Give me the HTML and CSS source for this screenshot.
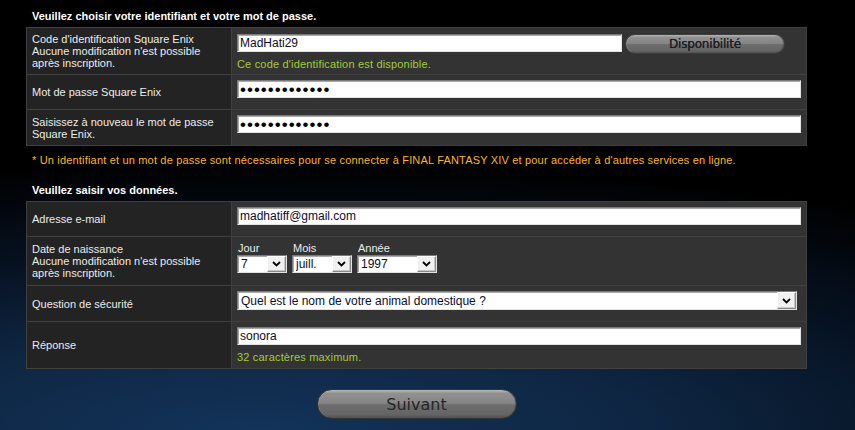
FILE: index.html
```html
<!DOCTYPE html>
<html lang="fr">
<head>
<meta charset="utf-8">
<title>Inscription</title>
<link rel="stylesheet" href="styles.css">
</head>
<body>
<main class="page">
  <h2 class="section-title">Veuillez choisir votre identifiant et votre mot de passe.</h2>
  <div class="form-table">
    <div class="row row-id">
      <div class="label">Code d'identification Square Enix<br>Aucune modification n'est possible<br>après inscription.</div>
      <div class="value value-id">
        <div class="inline">
          <input class="text id-input" type="text" value="MadHati29">
          <button class="pill pill-small" type="button">Disponibilité</button>
        </div>
        <p class="hint">Ce code d'identification est disponible.</p>
      </div>
    </div>
    <div class="row row-pass">
      <div class="label">Mot de passe Square Enix</div>
      <div class="value">
        <input class="text password" type="password" value="abcdefghijklm">
      </div>
    </div>
    <div class="row row-confirm">
      <div class="label">Saisissez à nouveau le mot de passe<br>Square Enix.</div>
      <div class="value">
        <input class="text password" type="password" value="abcdefghijklm">
      </div>
    </div>
  </div>

  <p class="note">* Un identifiant et un mot de passe sont nécessaires pour se connecter à FINAL FANTASY XIV et pour accéder à d'autres services en ligne.</p>

  <h2 class="section-title section-second">Veuillez saisir vos données.</h2>
  <div class="form-table">
    <div class="row row-mail">
      <div class="label">Adresse e-mail</div>
      <div class="value">
        <input class="text" type="text" value="madhatiff@gmail.com">
      </div>
    </div>
    <div class="row row-birth">
      <div class="label">Date de naissance<br>Aucune modification n'est possible<br>après inscription.</div>
      <div class="value">
        <div class="date-fields">
          <label class="date-field field-day">
            <span class="date-caption">Jour</span>
            <span class="select">
              <select><option>7</option></select>
              <span class="select-arrow"><svg width="9" height="6" viewBox="0 0 9 6"><path d="M1 1 L4.5 4.5 L8 1" fill="none" stroke="#000" stroke-width="1.8"/></svg></span>
            </span>
          </label>
          <label class="date-field field-month">
            <span class="date-caption">Mois</span>
            <span class="select">
              <select><option>juill.</option></select>
              <span class="select-arrow"><svg width="9" height="6" viewBox="0 0 9 6"><path d="M1 1 L4.5 4.5 L8 1" fill="none" stroke="#000" stroke-width="1.8"/></svg></span>
            </span>
          </label>
          <label class="date-field field-year">
            <span class="date-caption">Année</span>
            <span class="select">
              <select><option>1997</option></select>
              <span class="select-arrow"><svg width="9" height="6" viewBox="0 0 9 6"><path d="M1 1 L4.5 4.5 L8 1" fill="none" stroke="#000" stroke-width="1.8"/></svg></span>
            </span>
          </label>
        </div>
      </div>
    </div>
    <div class="row row-question">
      <div class="label">Question de sécurité</div>
      <div class="value">
        <span class="select select-question">
          <select><option>Quel est le nom de votre animal domestique ?</option></select>
          <span class="select-arrow"><svg width="9" height="6" viewBox="0 0 9 6"><path d="M1 1 L4.5 4.5 L8 1" fill="none" stroke="#000" stroke-width="1.8"/></svg></span>
        </span>
      </div>
    </div>
    <div class="row row-answer">
      <div class="label">Réponse</div>
      <div class="value">
        <input class="text" type="text" value="sonora">
        <p class="hint hint-answer">32 caractères maximum.</p>
      </div>
    </div>
  </div>

  <div class="actions">
    <button class="pill pill-large" type="submit">Suivant</button>
  </div>
</main>
</body>
</html>
```

FILE: styles.css
```css
* { box-sizing: border-box; }

html, body {
  margin: 0;
  height: 100%;
}

body {
  background-color: #000;
  background-image: radial-gradient(ellipse 130% 62% at 30% 100%, #13335a 0%, #0e2642 35%, #061222 65%, #000 100%);
  background-repeat: no-repeat;
  font-family: "Liberation Sans", Arial, sans-serif;
  font-size: 11px;
  color: #e6e6e6;
  overflow: hidden;
}

.page {
  width: 781px;
  margin-left: 26px;
  padding-top: 10px;
}

.section-title {
  margin: 0 0 5px;
  padding-left: 6px;
  font-size: 11px;
  line-height: 12px;
  font-weight: bold;
  color: #fff;
}

.section-second {
  margin-top: 18px;
}

.form-table {
  border: 1px solid #404040;
}

.row {
  display: grid;
  grid-template-columns: 205px 1fr;
  border-top: 1px solid #404040;
}

.row:first-child { border-top: 0; }

/* heights include the 1px top divider */
.row-id { min-height: 46px; }
.row-pass { min-height: 35px; }
.row-confirm { min-height: 36px; }
.row-mail { min-height: 34px; }
.row-birth { min-height: 49px; }
.row-question { min-height: 36px; }
.row-answer { min-height: 47px; }

.label {
  background: #232323;
  border-right: 1px solid #404040;
  padding: 0 5px;
  display: flex;
  align-items: center;
  line-height: 12px;
  color: #ececec;
}

.value {
  background: #333;
  padding: 5px 5px 0;
}

.value-id { padding-top: 6px; }

.inline {
  display: flex;
  align-items: flex-start;
}

.text {
  display: block;
  width: 100%;
  height: 18px;
  margin: 0;
  padding: 0 2px;
  border: 1px solid;
  border-color: #7a7a7a #e2e2e2 #e2e2e2 #7a7a7a;
  box-shadow: inset 1px 1px 0 #a8a8a8;
  background: #fff;
  font: 12px "Liberation Sans", Arial, sans-serif;
  color: #0c0c2c;
  outline: none;
}

.id-input {
  width: 385px;
  flex: none;
}

.password {
  font-size: 17px;
  letter-spacing: 1px;
  color: #000;
  padding-top: 1px;
}

.pill {
  display: block;
  padding: 0;
  border: 1px solid #3c3c3c;
  background: linear-gradient(#b8b8b8 0%, #919191 12%, #858585 47%, #6e6e6e 53%, #646464 88%, #505050 100%);
  box-shadow: inset 1px 0 0 rgba(255,255,255,0.15), inset -1px 0 0 rgba(0,0,0,0.2);
  color: #1e1e1e;
  font-family: "DejaVu Sans", Verdana, sans-serif;
  cursor: pointer;
}

.pill-small {
  width: 160px;
  height: 20px;
  margin-left: 3px;
  border-radius: 10px;
  font-size: 12px;
  letter-spacing: -0.2px;
  text-shadow: 0 0 0.4px #1e1e1e;
}

.pill-large {
  width: 200px;
  height: 30px;
  border-radius: 15px;
  font-size: 16px;
  border-color: #333;
  color: #262626;
}

.hint {
  margin: 4px 0 0;
  line-height: 12px;
  color: #a2cc38;
  font-size: 11px;
  letter-spacing: 0.18px;
}

.hint-answer { margin-top: 6px; }

.note {
  margin: 8px 0 0;
  padding-left: 6px;
  line-height: 12px;
  color: #ffb422;
  font-size: 11px;
  letter-spacing: 0.18px;
}

.date-fields {
  display: flex;
  gap: 5px;
}

.date-field {
  display: flex;
  flex-direction: column;
}

.date-caption {
  line-height: 13px;
  padding-left: 1px;
  color: #ececec;
}

.field-day { width: 50px; }
.field-month { width: 60px; }
.field-year { width: 80px; }

.select {
  position: relative;
  display: block;
  height: 18px;
}

.select select {
  display: block;
  width: 100%;
  height: 100%;
  margin: 0;
  padding: 0 0 0 3px;
  -webkit-appearance: none;
  appearance: none;
  border: 1px solid;
  border-color: #7a7a7a #e2e2e2 #e2e2e2 #7a7a7a;
  box-shadow: inset 1px 1px 0 #a8a8a8;
  border-radius: 0;
  background: #fff;
  font: 12px "Liberation Sans", Arial, sans-serif;
  color: #0c0c2c;
  outline: none;
}

.select-arrow {
  position: absolute;
  top: 1px;
  right: 1px;
  bottom: 1px;
  width: 19px;
  display: flex;
  align-items: center;
  justify-content: center;
  background: #f0f0f0;
  border: 1px solid;
  border-color: #fff #8a8a8a #8a8a8a #fff;
  box-shadow: inset -1px -1px 0 #c8c8c8;
  pointer-events: none;
}

.select-question {
  width: 560px;
  height: 19px;
}

.actions {
  display: flex;
  justify-content: center;
  padding-top: 20px;
}
```
